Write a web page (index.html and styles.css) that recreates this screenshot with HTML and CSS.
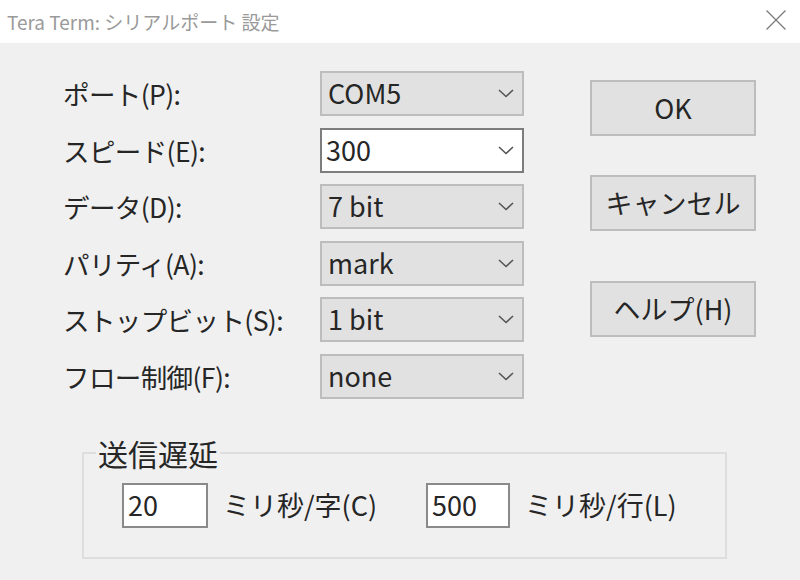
FILE: index.html
```html
<!DOCTYPE html>
<html lang="ja">
<head>
<meta charset="utf-8">
<title>Tera Term: シリアルポート 設定</title>
<link rel="stylesheet" href="styles.css">
</head>
<body>
<div class="dialog">
  <div class="titlebar">
    <span class="title">Tera Term: シリアルポート 設定</span>
    <svg class="close" width="20" height="20" viewBox="0 0 20 20"><path d="M0.5 0.5 L19.5 19.5 M19.5 0.5 L0.5 19.5" stroke="#7a7a7a" stroke-width="1.2" fill="none"/></svg>
  </div>
  <div class="content">
    <div class="form">
      <div class="label">ポート(P):</div>
      <div class="combo"><span>COM5</span><svg class="chev" width="16" height="9" viewBox="0 0 16 9"><path d="M1 1 L8 7.5 L15 1" stroke="#555" stroke-width="1.6" fill="none"/></svg></div>
      <div class="label">スピード(E):</div>
      <div class="combo edit"><span>300</span><svg class="chev" width="16" height="9" viewBox="0 0 16 9"><path d="M1 1 L8 7.5 L15 1" stroke="#555" stroke-width="1.6" fill="none"/></svg></div>
      <div class="label">データ(D):</div>
      <div class="combo"><span>7 bit</span><svg class="chev" width="16" height="9" viewBox="0 0 16 9"><path d="M1 1 L8 7.5 L15 1" stroke="#555" stroke-width="1.6" fill="none"/></svg></div>
      <div class="label">パリティ(A):</div>
      <div class="combo"><span>mark</span><svg class="chev" width="16" height="9" viewBox="0 0 16 9"><path d="M1 1 L8 7.5 L15 1" stroke="#555" stroke-width="1.6" fill="none"/></svg></div>
      <div class="label">ストップビット(S):</div>
      <div class="combo"><span>1 bit</span><svg class="chev" width="16" height="9" viewBox="0 0 16 9"><path d="M1 1 L8 7.5 L15 1" stroke="#555" stroke-width="1.6" fill="none"/></svg></div>
      <div class="label">フロー制御(F):</div>
      <div class="combo"><span>none</span><svg class="chev" width="16" height="9" viewBox="0 0 16 9"><path d="M1 1 L8 7.5 L15 1" stroke="#555" stroke-width="1.6" fill="none"/></svg></div>
    </div>
    <div class="buttons">
      <div class="btn">OK</div>
      <div class="btn btn-cancel">キャンセル</div>
      <div class="btn btn-help">ヘルプ(H)</div>
    </div>
  </div>
  <fieldset class="group">
    <legend>送信遅延</legend>
    <div class="delay-row">
      <div class="field">20</div>
      <span class="unit">ミリ秒/字(C)</span>
      <div class="field field-line">500</div>
      <span class="unit">ミリ秒/行(L)</span>
    </div>
  </fieldset>
</div>
</body>
</html>
```
FILE: styles.css
```css
html, body {
  margin: 0;
  padding: 0;
}
body {
  width: 800px;
  height: 580px;
  overflow: hidden;
  background: #f0f0f0;
  font-family: "Noto Sans CJK JP", "Noto Sans", sans-serif;
  color: #262626;
}
.dialog {
  width: 800px;
  height: 580px;
}
.titlebar {
  height: 43px;
  background: #ffffff;
  display: flex;
  align-items: center;
  justify-content: space-between;
  padding: 0 14px 0 7px;
  box-sizing: border-box;
}
.title {
  font-size: 19px;
  color: #9a9a9a;
  line-height: 1;
  padding-bottom: 1px;
}
.close {
  display: block;
  margin-top: -4px;
}
.content {
  display: flex;
  padding: 28px 0 0 63px;
}
.form {
  display: grid;
  grid-template-columns: 257px 204px;
  row-gap: 11.6px;
}
.label {
  font-size: 26.5px;
  line-height: 45px;
  height: 45px;
  white-space: nowrap;
  letter-spacing: -0.6px;
}
.combo {
  height: 45px;
  box-sizing: border-box;
  background: #e1e1e1;
  border: 2px solid #bdbdbd;
  display: flex;
  align-items: center;
  justify-content: space-between;
  padding: 0 8px 0 6px;
  font-size: 27px;
}
.combo span {
  line-height: 1;
  padding-bottom: 2px;
}
.combo.edit {
  background: #ffffff;
  border-color: #7d7d7d;
  padding-left: 4px;
}
.chev {
  display: block;
}
.buttons {
  display: flex;
  flex-direction: column;
  margin-left: 66px;
  margin-top: 9px;
  width: 166px;
}
.btn {
  height: 56px;
  box-sizing: border-box;
  background: #e1e1e1;
  border: 2px solid #bdbdbd;
  display: flex;
  align-items: center;
  justify-content: center;
  font-size: 27px;
  line-height: 1;
  padding-bottom: 2px;
}
.btn-cancel {
  margin-top: 39px;
}
.btn-help {
  margin-top: 50px;
}
.group {
  margin: 39px 0 0 82px;
  width: 645px;
  height: 121px;
  box-sizing: border-box;
  border: 2px solid #dedede;
  padding: 15px 0 0 0;
}
.group legend {
  font-size: 30px;
  line-height: 30px;
  padding: 0 2px;
  margin-left: 12px;
}
.delay-row {
  display: flex;
  align-items: center;
  padding-left: 38px;
}
.field {
  width: 86px;
  height: 45px;
  box-sizing: border-box;
  background: #ffffff;
  border: 2px solid #8a8a8a;
  font-size: 27px;
  display: flex;
  align-items: center;
  padding: 0 0 2px 4px;
}
.field-line {
  width: 84px;
  margin-left: 49px;
}
.unit {
  font-size: 27px;
  margin-left: 15px;
  line-height: 1;
  padding-bottom: 2px;
}
```
